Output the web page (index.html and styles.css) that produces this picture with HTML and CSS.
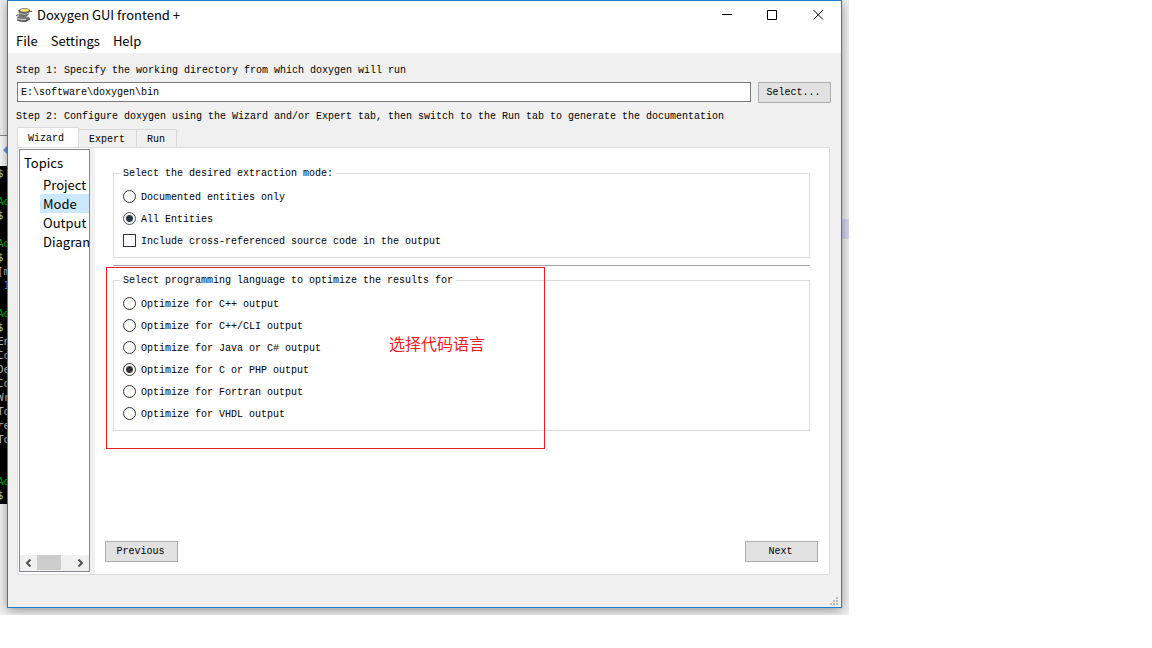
FILE: index.html
```html
<!DOCTYPE html>
<html lang="en">
<head>
<meta charset="utf-8">
<title>Doxygen GUI frontend</title>
<link rel="stylesheet" href="styles.css">
</head>
<body>
<div class="desktop">
  <div class="behind-page" aria-hidden="true">
    <svg class="behind-icon" viewBox="0 0 4 10"><path d="M4 1 0 5l4 4z" fill="#5b93e6"/></svg>
  </div>
  <pre class="terminal" aria-hidden="true"><i>$</i>

<b>Ad</b>
<i>$</i>

<b>Ad</b>
<i>$</i>
[m
<em> 1</em>

<b>Ad</b>
<i>$</i>
En
Co
De
Co
Wr
To
re
To


<b>Ad</b>
<i>$</i></pre>
  <div class="selection-mark"></div>

  <main class="window">
    <header class="titlebar">
      <svg class="app-icon" viewBox="0 0 16 16" aria-hidden="true">
        <path d="M1 10 4 8l9 2 1 2-4 3-8-1z" fill="#7a7a7a"/>
        <path d="M2 11.500q4 2 8 1" stroke="#d2d2d2" fill="none"/>
        <path d="M1 13q4 2 9 1l4-2" stroke="#4a4a4a" fill="none"/>
        <path d="M2 3 14 3 12.500 8Q8 11 3.500 8z" fill="#6a6a6a"/>
        <path d="M3 6q5 3 10 0" stroke="#bdbdbd" fill="none"/>
        <ellipse cx="8.500" cy="3.500" rx="5.500" ry="2.500" fill="#5a5a5a"/>
        <ellipse cx="8.500" cy="3.200" rx="4.500" ry="1.700" fill="#f0dc70"/>
        <path d="M13 4.500h3M0 8.500l4-1" stroke="#555"/>
      </svg>
      <h1 class="title">Doxygen GUI frontend +</h1>
      <div class="window-controls">
        <button class="control" aria-label="Minimize"><svg viewBox="0 0 11 11"><path d="M1 4.500h10"/></svg></button>
        <button class="control" aria-label="Maximize"><svg viewBox="0 0 11 11"><path d="M.5.5h9v9h-9z"/></svg></button>
        <button class="control" aria-label="Close"><svg viewBox="0 0 11 11"><path d="m.5 0 9.500 9.500m0-9.500-9.500 9.500"/></svg></button>
      </div>
    </header>
    <nav class="menubar">
      <button class="menu">File</button>
      <button class="menu">Settings</button>
      <button class="menu">Help</button>
    </nav>

    <div class="body">
      <label class="step" for="workdir">Step 1: Specify the working directory from which doxygen will run</label>
      <div class="dir-row">
        <input class="dir-input" id="workdir" type="text" value="E:\software\doxygen\bin">
        <button class="button">Select...</button>
      </div>
      <p class="step">Step 2: Configure doxygen using the Wizard and/or Expert tab, then switch to the Run tab to generate the documentation</p>

      <div class="tabs" role="tablist">
        <button class="tab tab-active" role="tab" aria-selected="true">Wizard</button>
        <button class="tab" role="tab" aria-selected="false">Expert</button>
        <button class="tab" role="tab" aria-selected="false">Run</button>
      </div>

      <div class="panel">
        <aside class="tree">
          <h2 class="tree-title">Topics</h2>
          <ul class="tree-list">
            <li class="tree-item">Project</li>
            <li class="tree-item tree-selected">Mode</li>
            <li class="tree-item">Output</li>
            <li class="tree-item">Diagrams</li>
          </ul>
          <div class="scrollbar">
            <button class="scroll-arrow" aria-label="Scroll left"><svg viewBox="0 0 7 8"><path d="M5.500.5 2 4l3.500 3.500"/></svg></button>
            <div class="scroll-track"><div class="scroll-thumb"></div></div>
            <button class="scroll-arrow" aria-label="Scroll right"><svg viewBox="0 0 7 8"><path d="M1.500.5 5 4 1.500 7.500"/></svg></button>
          </div>
        </aside>

        <section class="page">
          <fieldset class="group">
            <legend class="legend">Select the desired extraction mode:</legend>
            <label class="option"><input class="radio" type="radio" name="mode"><span class="option-text">Documented entities only</span></label>
            <label class="option"><input class="radio radio-blue" type="radio" name="mode" checked><span class="option-text">All Entities</span></label>
            <label class="option"><input class="check" type="checkbox"><span class="option-text">Include cross-referenced source code in the output</span></label>
          </fieldset>
          <hr class="divider">
          <div class="annotated">
            <fieldset class="group">
              <legend class="legend">Select programming language to optimize the results for</legend>
              <label class="option"><input class="radio" type="radio" name="lang"><span class="option-text">Optimize for C++ output</span></label>
              <label class="option"><input class="radio" type="radio" name="lang"><span class="option-text">Optimize for C++/CLI output</span></label>
              <label class="option"><input class="radio" type="radio" name="lang"><span class="option-text">Optimize for Java or C# output</span></label>
              <label class="option"><input class="radio" type="radio" name="lang" checked><span class="option-text">Optimize for C or PHP output</span></label>
              <label class="option"><input class="radio" type="radio" name="lang"><span class="option-text">Optimize for Fortran output</span></label>
              <label class="option"><input class="radio" type="radio" name="lang"><span class="option-text">Optimize for VHDL output</span></label>
            </fieldset>
            <div class="annotation"><span class="note" lang="zh">选择代码语言</span></div>
          </div>
          <footer class="page-nav">
            <button class="button">Previous</button>
            <button class="button">Next</button>
          </footer>
        </section>
      </div>
    </div>
    <svg class="grip" viewBox="0 0 8 8" aria-hidden="true"><path d="M6 0h2v2H6zM3 3h2v2H3zM6 3h2v2H6zM0 6h2v2H0zM3 6h2v2H3zM6 6h2v2H6z" fill="#bfbfbf"/></svg>
  </main>
</div>
</body>
</html>
```
FILE: styles.css
```css
* { box-sizing: border-box; }

body {
  margin: 0;
  background: #fff;
  color: #000;
  font: 10px/12px "Liberation Mono", monospace;
}

button, input { font: inherit; color: inherit; margin: 0; }

.desktop {
  position: relative;
  margin-right: 303px;
  padding: 0 7px 7px;
  overflow: hidden;
  background: #f0f0f0;
}

.behind-page {
  position: absolute;
  left: 0;
  top: 135px;
  width: 7px;
  height: 31px;
  border-top: 1px solid #8c8c8c;
  background: #fafafa;
}

.behind-icon {
  position: absolute;
  right: 0;
  top: 9px;
  width: 4px;
  height: 10px;
}

.terminal {
  position: absolute;
  left: -3px;
  top: 166px;
  width: 10px;
  height: 338px;
  margin: 0;
  padding-top: 1px;
  overflow: hidden;
  background: #000;
  color: #bfbfbf;
  font: 11px/14px "DejaVu Sans Mono", monospace;
}

.terminal b { color: #00a800; font-weight: 400; }
.terminal i { color: #bfbf9f; font-style: normal; }
.terminal em { color: #5b93e6; font-style: normal; }

.selection-mark {
  position: absolute;
  right: 0;
  top: 219px;
  width: 7px;
  height: 20px;
  background: #d4d4f0;
}

.window {
  position: relative;
  display: flex;
  flex-direction: column;
  height: calc(100vh - 40px);
  min-height: 540px;
  border: 1px solid #1a80d2;
  background: #f0f0f0;
  box-shadow: 0 2px 10px rgba(0, 0, 0, .4);
}

.titlebar {
  display: flex;
  align-items: center;
  height: 30px;
  padding: 0 0 2px 8px;
  background: #fff;
}

.app-icon { width: 16px; height: 16px; margin-right: 5px; }

.title { margin: 0; font: 400 13px/20px "Noto Sans CJK SC", sans-serif; }

.window-controls { display: flex; margin-left: auto; }

.control {
  display: grid;
  place-items: center;
  width: 46px;
  height: 28px;
  padding: 1px 0 0;
  border: 0;
  background: none;
}

.control svg { width: 11px; height: 11px; fill: none; stroke: #000; }

.menubar {
  display: flex;
  gap: 13px;
  height: 22px;
  padding: 0 0 2px 8px;
  background: #fff;
}

.menu {
  padding: 0;
  border: 0;
  background: none;
  font: 13px/20px "Noto Sans CJK SC", sans-serif;
}

.body {
  display: flex;
  flex: 1;
  flex-direction: column;
  min-height: 0;
  padding: 12px 11px 32px 9px;
}

.step { margin: 0 0 0 -1px; white-space: nowrap; }

.dir-row {
  display: flex;
  align-items: flex-start;
  gap: 7px;
  margin: 5px 0 8px;
}

.dir-row .button { margin-right: -1px; }

.dir-input {
  flex: 1;
  height: 20px;
  padding: 0 3px;
  border: 1px solid #7a7a7a;
  background: #fff;
}

.button {
  width: 73px;
  height: 21px;
  padding: 0 2px 0 0;
  border: 1px solid #adadad;
  background: #e1e1e1;
}

.tabs { display: flex; align-items: flex-end; margin-top: 4px; }

.tab {
  height: 18px;
  padding: 3px 11px 0 10px;
  border: 1px solid #d9d9d9;
  border-width: 1px 1px 0 0;
  background: #f0f0f0;
}

.tab-active {
  position: relative;
  height: 20px;
  padding: 3px 14px 0 10px;
  border-left-width: 1px;
  background: #fff;
}

.panel {
  display: flex;
  flex: 1;
  min-height: 0;
  padding: 0 0 0 1px;
  border: 1px solid #dcdcdc;
  background: #fff;
}

.tree {
  display: flex;
  flex-direction: column;
  width: 71px;
  margin: 1px 0 2px;
  border: 1px solid #828790;
  overflow: hidden;
  font: 13px/19px "Noto Sans CJK SC", sans-serif;
}

.tree-title { margin: 3px 0 3px 4px; font: inherit; }

.tree-list { margin: 0; padding: 0 0 0 20px; list-style: none; }

.tree-item { padding-left: 3px; }

.tree-selected { background: #cce8ff; }

.scrollbar {
  display: flex;
  height: 16px;
  margin-top: auto;
  background: #f0f0f0;
}

.scroll-arrow {
  display: grid;
  place-items: center;
  width: 17px;
  padding: 0;
  border: 0;
  background: none;
}

.scroll-arrow svg { width: 7px; height: 8px; fill: none; stroke: #505050; stroke-width: 2; }

.scroll-track { flex: 1; }

.scroll-thumb { width: 24px; height: 15px; background: #cdcdcd; }

.page {
  display: flex;
  flex: 1;
  flex-direction: column;
  padding: 18px 11px 12px 10px;
  border-left: 5px solid #f0f0f0;
}

.group {
  margin: 0 8px;
  padding: 5px 9px 6px;
  border: 1px solid #dcdcdc;
}

.legend { margin-left: -3px; padding: 2px 3px 0; }

.option {
  display: flex;
  align-items: center;
  gap: 5px;
  height: 22px;
}

.option-text { padding-top: 4px; }

.radio, .check {
  flex: none;
  width: 13px;
  height: 13px;
  appearance: none;
  border: 1px solid #333;
  background: #fff;
}

.radio { border-radius: 50%; }

.radio:checked { background: radial-gradient(circle, #333 3px, #fff 4px); }

.radio-blue:checked {
  border-color: #45586a;
  background: radial-gradient(circle, #263746 3px, #fff 4px);
}

.divider {
  width: auto;
  height: 1px;
  margin: 7px 8px;
  border: 0;
  background: #a0a0a0;
}

.annotated { position: relative; }

.annotation {
  position: absolute;
  left: 1px;
  top: -6px;
  width: 439px;
  height: 182px;
  border: 1px solid #ed1c24;
  pointer-events: none;
}

.note {
  position: absolute;
  left: 282px;
  top: 65px;
  color: #ed1c24;
  font: 16px/20px "Noto Sans CJK SC", sans-serif;
  white-space: nowrap;
}

.page-nav {
  display: flex;
  justify-content: space-between;
  margin-top: auto;
}

.grip {
  position: absolute;
  right: 3px;
  bottom: 2px;
  width: 8px;
  height: 8px;
}
```
